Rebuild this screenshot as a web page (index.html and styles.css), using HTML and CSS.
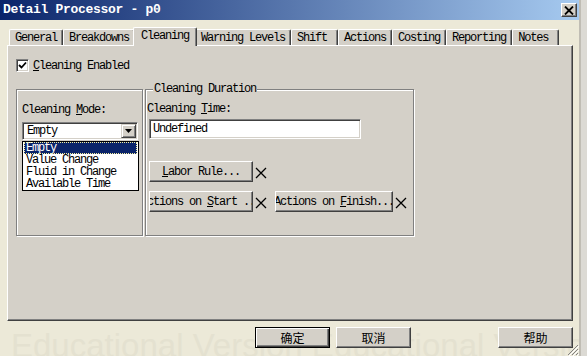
FILE: index.html
```html
<!DOCTYPE html>
<html lang="en">
<head>
  <meta charset="UTF-8" />
  <title>Detail Processor - p0</title>
  <link rel="stylesheet" href="styles.css">
</head>
<body>
  <div class="window">
    <div class="titlebar">
      <span class="title">Detail Processor - p0</span>
      <span class="close-btn">
        <svg width="10" height="9" viewBox="0 0 10 9"><path d="M1 0.5 L9 8.5 M9 0.5 L1 8.5" stroke="#000" stroke-width="1.8"/></svg>
      </span>
    </div>

    <div class="tabs">
      <div class="tab">General</div>
      <div class="tab">Breakdowns</div>
      <div class="tab active">Cleaning</div>
      <div class="tab">Warning Levels</div>
      <div class="tab">Shift</div>
      <div class="tab">Actions</div>
      <div class="tab">Costing</div>
      <div class="tab">Reporting</div>
      <div class="tab">Notes</div>
    </div>

    <div class="panel">
      <div class="check-row">
        <span class="checkbox">
          <svg width="9" height="9" viewBox="0 0 9 9"><polyline points="1,4 3.5,6.5 8,1.5" fill="none" stroke="#000" stroke-width="1.8"/></svg>
        </span>
        <span><u>C</u>leaning Enabled</span>
      </div>

      <div class="groups">
        <div class="group group-mode">
          <div class="field-label">Cleaning <u>M</u>ode:</div>
          <div class="combo">
            <span class="combo-value">Empty</span>
            <span class="combo-btn">
              <svg width="7" height="4" viewBox="0 0 7 4"><polygon points="0,0 7,0 3.5,4" fill="#000"/></svg>
            </span>
            <ul class="combo-list">
              <li class="selected">Empty</li>
              <li>Value Change</li>
              <li>Fluid in Change</li>
              <li>Available Time</li>
            </ul>
          </div>
        </div>

        <div class="group group-duration">
          <span class="group-title">Cleaning Duration</span>
          <div class="field-label">Cleaning <u>T</u>ime:</div>
          <div class="textbox">Undefined</div>

          <div class="btn-row first">
            <div class="btn btn-short"><span><u>L</u>abor Rule...</span></div>
            <svg class="clear-x" width="12" height="12" viewBox="0 0 12 12"><path d="M1 1 L11 11 M11 1 L1 11" stroke="#000" stroke-width="1.3"/></svg>
          </div>
          <div class="btn-row">
            <div class="btn btn-short"><span>Actions on <u>S</u>tart ...</span></div>
            <svg class="clear-x" width="12" height="12" viewBox="0 0 12 12"><path d="M1 1 L11 11 M11 1 L1 11" stroke="#000" stroke-width="1.3"/></svg>
            <div class="btn btn-long"><span>Actions on <u>F</u>inish...</span></div>
            <svg class="clear-x" width="12" height="12" viewBox="0 0 12 12"><path d="M1 1 L11 11 M11 1 L1 11" stroke="#000" stroke-width="1.3"/></svg>
          </div>
        </div>
      </div>
    </div>

    <div class="watermark">Educational Version Educational Version</div>

    <div class="footer">
      <div class="btn dlg-btn default">确定</div>
      <div class="btn dlg-btn">取消</div>
      <div class="btn dlg-btn help">帮助</div>
    </div>

    <svg class="grip" width="12" height="12" viewBox="0 0 12 12">
      <path d="M11 1 L1 11 M11 5 L5 11 M11 9 L9 11" stroke="#808080" stroke-width="1"/>
      <path d="M12 2 L2 12 M12 6 L6 12 M12 10 L10 12" stroke="#fff" stroke-width="1"/>
    </svg>
  </div>
</body>
</html>
```

FILE: styles.css
```css
:root {
  --face: #d4d0c8;
  --window: #ece9d8;
  --shadow: #808080;
  --dark: #404040;
  --navy: #0a246a;
}

* {
  box-sizing: border-box;
}

body {
  margin: 0;
  background: #dcdad4;
  font-family: "Liberation Mono", "Noto Sans CJK SC", monospace;
  font-size: 12px;
  line-height: 12px;
  letter-spacing: -1.2px;
  color: #000;
}

.window {
  position: relative;
  width: 581px;
  height: 356px;
  background: var(--window);
  border-right: 2px solid #c0bdb4;
  overflow: hidden;
}

/* title bar */
.titlebar {
  height: 20px;
  display: flex;
  align-items: center;
  justify-content: space-between;
  padding: 0 2px 0 3px;
  background: linear-gradient(to right, var(--navy), #a6caf0);
  color: #fff;
}

.title {
  font-size: 13px;
  font-weight: bold;
  letter-spacing: -0.3px;
}

.close-btn {
  width: 16px;
  height: 14px;
  display: flex;
  align-items: center;
  justify-content: center;
  background: var(--face);
  border: 1px solid;
  border-color: #fff var(--dark) var(--dark) #fff;
  box-shadow: inset -1px -1px 0 var(--shadow);
}

/* tabs */
.tabs {
  height: 25px;
  display: flex;
  align-items: flex-end;
  padding-left: 9px;
}

.tab {
  height: 16px;
  min-width: 47px;
  padding: 1px 5px 0;
  line-height: 14px;
  background: var(--face);
  border-top: 1px solid #fff;
  border-left: 1px solid #fff;
  border-right: 1px solid var(--dark);
  border-radius: 2px 2px 0 0;
  box-shadow: inset -1px 0 0 var(--shadow);
  white-space: nowrap;
}

.tab.active {
  position: relative;
  z-index: 1;
  height: 19px;
  margin: 0 -2px -1px;
  padding: 2px 7px 0;
  line-height: 12px;
}

/* page body */
.panel {
  width: 566px;
  height: 276px;
  margin-left: 7px;
  padding: 13px 0 0 8px;
  background: var(--face);
  border: 1px solid;
  border-color: #fff var(--dark) var(--dark) #fff;
  box-shadow: inset -1px -1px 0 var(--shadow);
}

.check-row {
  display: flex;
  align-items: center;
  gap: 4px;
  height: 13px;
}

.checkbox {
  width: 13px;
  height: 13px;
  display: flex;
  align-items: center;
  justify-content: center;
  background: #fff;
  border: 1px solid;
  border-color: var(--shadow) #fff #fff var(--shadow);
  box-shadow: inset 1px 1px 0 var(--dark), inset -1px -1px 0 var(--face);
}

.groups {
  display: flex;
  gap: 2px;
  margin-top: 17px;
}

.group {
  position: relative;
  height: 147px;
  border: 1px solid var(--shadow);
  box-shadow: 1px 1px 0 #fff, inset 1px 1px 0 #fff;
}

.group-mode {
  width: 127px;
  padding: 14px 0 0 5px;
}

.group-duration {
  width: 269px;
  padding: 13px 0 0 1px;
}

.group-title {
  position: absolute;
  top: -7px;
  left: 7px;
  padding: 0 1px;
  background: var(--face);
}

.field-label {
  height: 12px;
}

/* combo box with open list */
.combo {
  position: relative;
  width: 116px;
  height: 18px;
  margin-top: 6px;
  display: flex;
  align-items: center;
  justify-content: space-between;
  padding: 0 1px 0 3px;
  background: #fff;
  border: 1px solid;
  border-color: var(--shadow) #fff #fff var(--shadow);
  box-shadow: inset 1px 1px 0 var(--dark), inset -1px -1px 0 var(--face);
}

.combo-value {
  padding-left: 1px;
}

.combo-btn {
  width: 15px;
  height: 14px;
  display: flex;
  align-items: center;
  justify-content: center;
  background: var(--face);
  border: 1px solid;
  border-color: var(--face) var(--dark) var(--dark) var(--face);
  box-shadow: inset 1px 1px 0 #fff, inset -1px -1px 0 var(--shadow);
}

.combo-list {
  position: absolute;
  top: 18px;
  left: -1px;
  width: 117px;
  margin: 0;
  padding: 0 1px;
  list-style: none;
  background: #fff;
  border: 1px solid #000;
}

.combo-list li {
  height: 12px;
  padding-left: 2px;
}

.combo-list li.selected {
  background: var(--navy);
  color: #fff;
  outline: 1px dotted #f4f0a0;
  outline-offset: -1px;
}

.textbox {
  width: 212px;
  height: 20px;
  margin: 4px 0 0 2px;
  padding: 3px 0 0 3px;
  background: #fff;
  border: 1px solid;
  border-color: var(--shadow) #fff #fff var(--shadow);
  box-shadow: inset 1px 1px 0 var(--dark), inset -1px -1px 0 var(--face);
}

/* buttons */
.btn {
  height: 21px;
  display: flex;
  align-items: center;
  justify-content: center;
  overflow: hidden;
  white-space: nowrap;
  background: var(--face);
  border: 1px solid;
  border-color: #fff var(--dark) var(--dark) #fff;
  box-shadow: inset -1px -1px 0 var(--shadow);
}

.btn span {
  flex-shrink: 0;
}

.btn-row {
  display: flex;
  align-items: center;
  gap: 2px;
  margin: 9px 0 0 2px;
}

.btn-row.first {
  margin-top: 22px;
}

.btn-short {
  width: 104px;
}

.btn-long {
  width: 118px;
}

.clear-x {
  margin-top: 2px;
  margin-right: 6px;
}

/* dialog buttons */
.footer {
  position: relative;
  z-index: 1;
  display: flex;
  justify-content: flex-end;
  gap: 6px;
  margin-top: 6px;
  padding-right: 6px;
}

.dlg-btn {
  width: 75px;
  font-family: "Noto Sans CJK SC", sans-serif;
  font-size: 12px;
  letter-spacing: 0;
}

.dlg-btn.default {
  border-color: #000;
  box-shadow: inset 1px 1px 0 #fff, inset -1px -1px 0 var(--dark), inset -2px -2px 0 var(--shadow);
}

.dlg-btn.help {
  margin-left: 81px;
}

.watermark {
  position: absolute;
  left: 11px;
  top: 329px;
  font-family: "Liberation Sans", sans-serif;
  font-size: 33px;
  line-height: 33px;
  letter-spacing: 0;
  white-space: nowrap;
  color: #e4e1d0;
}

.grip {
  position: absolute;
  right: 0;
  bottom: 0;
}
```
